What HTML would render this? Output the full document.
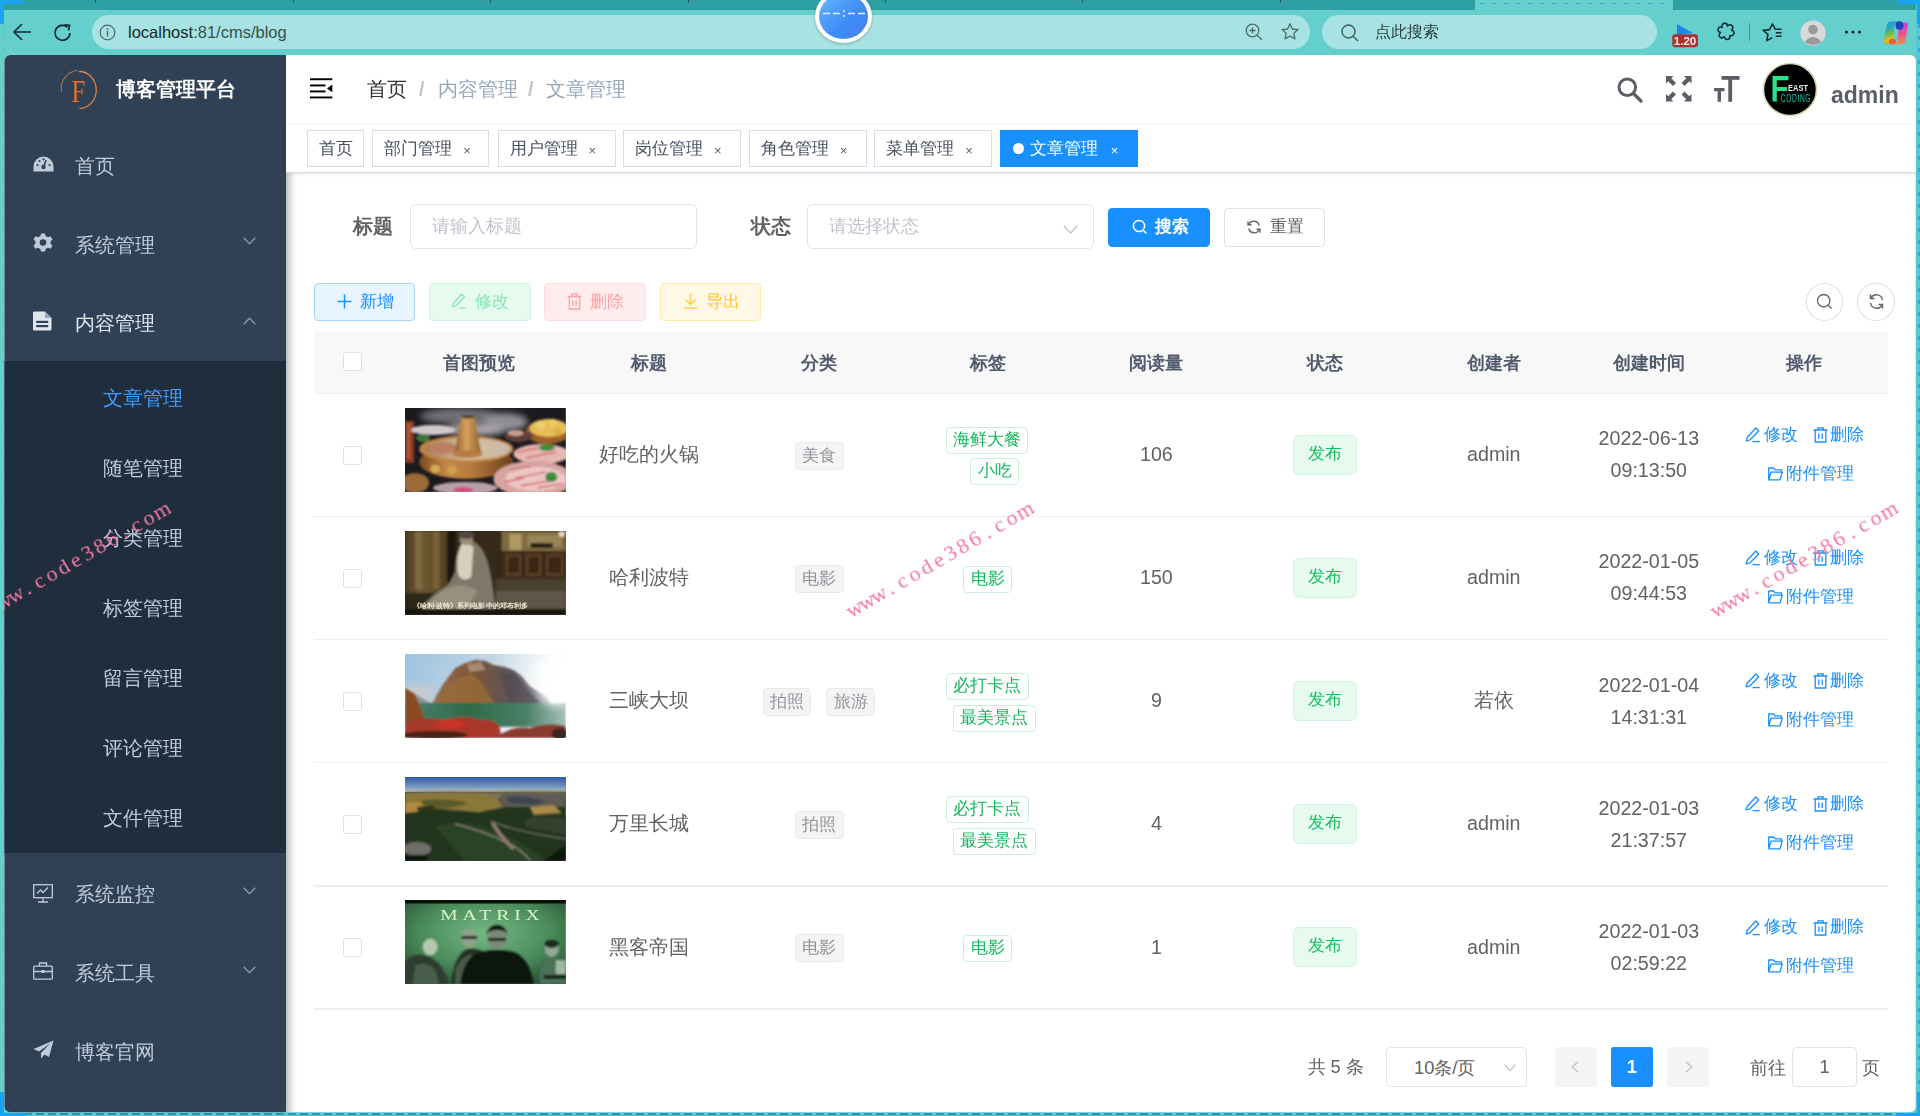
<!DOCTYPE html>
<html><head><meta charset="utf-8">
<style>
*{box-sizing:border-box;}
html,body{margin:0;padding:0;}
body{width:1920px;height:1116px;overflow:hidden;position:relative;background:#64cfcc;font-family:"Liberation Sans",sans-serif;}
.a{position:absolute;}
.t{position:absolute;white-space:nowrap;}
/* chrome */
#topstrip{left:0;top:0;width:1920px;height:10px;background:#2e9fa2;}
.pill{position:absolute;top:15px;height:34px;border-radius:17px;background:#a7e3e2;}
/* page */
#page{position:absolute;left:0;top:0;width:1920px;height:1116px;clip-path:inset(55px 4.3px 3.8px 4.5px round 6px);background:#fff;}
#sidebar{left:3.5px;top:55px;width:282.5px;height:1062px;background:#304156;box-shadow:3px 0 8px rgba(0,21,41,.35);}
.mi{position:absolute;left:75px;font-size:19.67px;line-height:30px;height:30px;color:#bfcbd9;}
.smi{position:absolute;left:103px;font-size:19.67px;line-height:30px;height:30px;color:#bfcbd9;}
.arrow{position:absolute;left:243px;width:13px;height:8px;}
.ic{position:absolute;}
/* navbar */
.bc{font-size:19.67px;line-height:30px;top:74px;}
/* tags */
.tag{position:absolute;top:130.4px;height:36.5px;border:1.4px solid #d8dce5;background:#fff;color:#495060;font-size:16.86px;line-height:36px;padding-left:11px;}
.tag .x{position:absolute;font-size:13px;color:#5a6070;margin-left:2px;margin-top:1.5px;}
/* form */
.lbl{font-size:19.67px;line-height:30px;font-weight:bold;color:#606266;}
.inp{position:absolute;height:44.4px;border:1.4px solid #e0e3e9;border-radius:5.6px;background:#fff;}
.ph{font-size:18.27px;line-height:30px;color:#c0c4cc;}
.btn{position:absolute;border-radius:4.2px;font-size:16.86px;}
/* table */
.th{font-size:18.27px;line-height:30px;font-weight:bold;color:#515a6e;}
.td{font-size:19.67px;line-height:30px;color:#606266;}
.cb{position:absolute;width:19px;height:19px;border:1.4px solid #dcdfe6;border-radius:2.8px;background:#fff;}
.gtag{position:absolute;height:27px;border:1.4px solid #c9efd9;border-radius:4.2px;background:#fff;color:#13b85c;font-size:16.86px;line-height:24px;text-align:center;}
.itag{position:absolute;height:28px;border:1.4px solid #e9e9eb;border-radius:4.2px;background:#f4f4f5;color:#909399;font-size:16.86px;line-height:25px;text-align:center;}
.stag{position:absolute;height:39.6px;border:1.4px solid #d0f5e0;border-radius:5.6px;background:#e7faf0;color:#13c060;font-size:16.86px;line-height:36px;text-align:center;}
.op{font-size:16.86px;line-height:24px;color:#1890ff;}
.rowline{position:absolute;left:313.8px;width:1574px;height:1.4px;background:#ebeef5;}
.wm{position:absolute;font-family:"Liberation Serif",serif;color:#f07aa0;font-size:22px;line-height:22px;transform-origin:0 0;white-space:nowrap;}
.wm span{display:inline-block;width:14px;text-align:center;}
</style></head>
<body><div id="wrap" style="position:absolute;left:0;top:0;width:1920px;height:1116px;overflow:hidden;filter:blur(0.35px)">
<!-- ============ BROWSER CHROME ============ -->
<div id="topstrip" class="a"></div>
<div class="a" style="left:24px;top:1.5px;width:1450px;height:1px;background:repeating-linear-gradient(90deg,#3a9ed0 0 3px,transparent 3px 12px);opacity:.5"></div>
<div class="a" style="left:95px;top:0;width:1.2px;height:3px;background:#1d5a5a"></div>
<div class="a" style="left:293px;top:0;width:1.2px;height:3px;background:#1d5a5a"></div>
<div class="a" style="left:490px;top:0;width:1.2px;height:3px;background:#1d5a5a"></div>
<div class="a" style="left:688px;top:0;width:1.2px;height:3px;background:#1d5a5a"></div>
<div class="a" style="left:885px;top:0;width:1.2px;height:3px;background:#1d5a5a"></div>
<div class="a" style="left:1082px;top:0;width:1.2px;height:3px;background:#1d5a5a"></div>
<div class="a" style="left:1280px;top:0;width:1.2px;height:3px;background:#1d5a5a"></div>
<div class="a" style="left:1475px;top:0;width:198px;height:10px;background:#64cfcc;border-radius:0 0 0 0"></div>
<div class="a" style="left:1480px;top:2.5px;width:190px;height:1px;background:repeating-linear-gradient(90deg,#3aa8d8 0 5px,transparent 5px 12px)"></div>
<div class="a" style="left:0;top:0;width:4px;height:24px;background:#1aa3f0"></div>
<div class="a" style="left:0;top:0;width:24px;height:4px;background:#1aa3f0"></div>
<div class="pill" style="left:92px;width:1218px;"></div>
<div class="pill" style="left:1322px;width:335px;"></div>
<!-- back arrow -->
<svg class="a" style="left:12px;top:22px" width="22" height="20" viewBox="0 0 22 20"><path d="M2 10 H19 M10 2 L2 10 L10 18" fill="none" stroke="#0f2b2e" stroke-width="1.6"/></svg>
<!-- refresh -->
<svg class="a" style="left:52px;top:22px" width="22" height="22" viewBox="0 0 22 22"><path d="M18 11 A7.5 7.5 0 1 1 15.5 5.2" fill="none" stroke="#0f2b2e" stroke-width="1.7"/><path d="M12.5 2.5 L17.5 3.5 L16.5 8.5" fill="none" stroke="#0f2b2e" stroke-width="1.7"/></svg>
<!-- info -->
<svg class="a" style="left:99px;top:24px" width="17" height="17" viewBox="0 0 17 17"><circle cx="8.5" cy="8.5" r="7.3" fill="none" stroke="#4c6a6b" stroke-width="1.2"/><rect x="7.8" y="7" width="1.4" height="5.5" fill="#4c6a6b"/><circle cx="8.5" cy="4.9" r="0.9" fill="#4c6a6b"/></svg>
<div class="t" style="left:128px;top:22px;font-size:16.5px;line-height:20px;color:#13282a">localhost<span style="color:#35504f">:81/cms/blog</span></div>
<!-- zoom icon -->
<svg class="a" style="left:1244px;top:22px" width="20" height="20" viewBox="0 0 20 20"><circle cx="8.5" cy="8.5" r="6.3" fill="none" stroke="#4e6b6c" stroke-width="1.3"/><path d="M8.5 5.5 V11.5 M5.5 8.5 H11.5 M13 13 L18 18" stroke="#4e6b6c" stroke-width="1.3"/></svg>
<!-- star -->
<svg class="a" style="left:1280px;top:22px" width="20" height="20" viewBox="0 0 20 20"><path d="M10 1.8 L12.4 7 L18 7.6 L13.8 11.3 L15 16.9 L10 14 L5 16.9 L6.2 11.3 L2 7.6 L7.6 7 Z" fill="none" stroke="#4e6b6c" stroke-width="1.3" stroke-linejoin="round"/></svg>
<!-- search icon in pill -->
<svg class="a" style="left:1340px;top:23px" width="20" height="20" viewBox="0 0 20 20"><circle cx="8.5" cy="8.5" r="6.5" fill="none" stroke="#3d5d5e" stroke-width="1.4"/><path d="M13.2 13.2 L18 18" stroke="#3d5d5e" stroke-width="1.4"/></svg>
<div class="t" style="left:1375px;top:22px;font-size:16px;line-height:20px;color:#2c3b3b">点此搜索</div>
<!-- badge -->
<svg class="a" style="left:1672px;top:23px" width="27" height="25" viewBox="0 0 27 25"><path d="M5 1 L21 10 L5 12 Z" fill="#1e88e5"/><rect x="0.3" y="11.2" width="25.7" height="13" rx="3" fill="#a83232"/><text x="13" y="22.4" font-family="Liberation Sans" font-size="11.5" font-weight="bold" fill="#fbe8e8" text-anchor="middle">1.20</text></svg>
<!-- puzzle -->
<svg class="a" style="left:1717px;top:22px" width="19" height="19" viewBox="0 0 19 19"><path d="M10.65 3.95 C14.12 0.95 17.72 4.83 14.46 8.06 C18.80 9.56 17.23 14.62 12.81 13.41 C13.67 17.91 8.51 19.09 7.35 14.65 C3.88 17.65 0.28 13.77 3.54 10.54 C-0.80 9.04 0.77 3.98 5.19 5.19 C4.33 0.69 9.49 -0.49 10.65 3.95 Z" fill="none" stroke="#0f2a2c" stroke-width="1.5" stroke-linejoin="round"/></svg>
<div class="a" style="left:1748.5px;top:23px;width:1.3px;height:18px;background:#3a9a9c"></div>
<!-- star list -->
<svg class="a" style="left:1762px;top:22px" width="22" height="21" viewBox="0 0 22 21"><path d="M13.3 7.3 L10.4 2 L7.5 7.6 L1.3 8.4 L5.9 12.5 L4.8 18.6 L10.3 15.6" fill="none" stroke="#0f2a2c" stroke-width="1.6" stroke-linejoin="round"/><path d="M13.2 7.2 H19.5 M13.8 10.8 H19.5 M13.8 14.3 H19.5" stroke="#0f2a2c" stroke-width="1.6"/></svg>
<!-- avatar -->
<svg class="a" style="left:1800px;top:19.5px" width="26" height="26" viewBox="0 0 26 26"><circle cx="13" cy="13" r="12.6" fill="#d9d9d9"/><circle cx="13" cy="9.5" r="4.8" fill="#9b9b9b"/><path d="M4.5 22 Q13 12 21.5 22 Q13 28 4.5 22 Z" fill="#9b9b9b"/></svg>
<!-- more -->
<svg class="a" style="left:1844px;top:29px" width="18" height="6" viewBox="0 0 18 6"><circle cx="2.5" cy="3" r="1.6" fill="#102a2c"/><circle cx="9" cy="3" r="1.6" fill="#102a2c"/><circle cx="15.5" cy="3" r="1.6" fill="#102a2c"/></svg>
<!-- copilot -->
<svg class="a" style="left:1882px;top:20px" width="28" height="26" viewBox="0 0 28 26">
<defs><linearGradient id="cpa" x1="0" y1="0" x2="0.3" y2="1"><stop offset="0" stop-color="#1f8fe0"/><stop offset=".35" stop-color="#2aa8c8"/><stop offset=".6" stop-color="#62c048"/><stop offset=".85" stop-color="#e8c020"/><stop offset="1" stop-color="#f08a20"/></linearGradient>
<linearGradient id="cpb" x1="0" y1="0" x2="0" y2="1"><stop offset="0" stop-color="#c448e0"/><stop offset=".5" stop-color="#f0508a"/><stop offset="1" stop-color="#f59050"/></linearGradient></defs>
<path d="M5 4 Q6 1.5 9 1.5 H17 Q13 2.5 12.5 6 L11 20 Q10.5 23.5 7 23.5 H4 Q1.5 23.5 2 20.5 Z" fill="url(#cpa)"/>
<path d="M23 22 Q22 24.5 19 24.5 H11 Q15 23.5 15.5 20 L17 6 Q17.5 2.5 21 2.5 H24 Q26.5 2.5 26 5.5 Z" fill="url(#cpb)"/>
<ellipse cx="17.5" cy="5.5" rx="4" ry="4.2" fill="#1d3fc4"/>
<ellipse cx="10.5" cy="21.5" rx="3.5" ry="3" fill="#e8602a"/>
</svg>
<div class="a" style="left:1916px;top:0;width:4px;height:1116px;background:#56c9d0"></div>
<div class="a" style="left:1918px;top:24px;width:1.5px;height:1092px;background:repeating-linear-gradient(180deg,#3aa6d6 0 4px,transparent 4px 12px)"></div>
<div class="a" style="left:1898px;top:0;width:22px;height:4px;background:#1aa3f0"></div>
<div class="a" style="left:1917px;top:0;width:3px;height:24px;background:#1aa3f0"></div>
<div class="a" style="left:2.5px;top:24px;width:1.5px;height:1092px;background:repeating-linear-gradient(180deg,#3ab4d8 0 4px,transparent 4px 12px);opacity:.5"></div>
<div class="a" style="left:0;top:1112px;width:1920px;height:4px;background:#56c9d0"></div>
<div class="a" style="left:0;top:1113px;width:1920px;height:1.5px;background:repeating-linear-gradient(90deg,#2a98b0 0 8px,transparent 8px 12px)"></div>
<div class="a" style="left:0;top:1092px;width:4px;height:24px;background:#1aa3f0"></div>
<div class="a" style="left:0;top:1113px;width:25px;height:3px;background:#1aa3f0"></div>
<div class="a" style="left:1896px;top:1113px;width:24px;height:3px;background:#1aa3f0"></div>
<div class="a" style="left:1917px;top:1092px;width:3px;height:24px;background:#1aa3f0"></div>
<!-- floating circle -->
<div class="a" style="left:815px;top:-10px;width:57px;height:53px;border-radius:50%;background:#fff;box-shadow:0 1px 3px rgba(0,0,0,.25)"></div>
<div class="a" style="left:819px;top:-6px;width:49px;height:45px;border-radius:50%;background:linear-gradient(135deg,#69b7ff,#3d8cf5 60%,#4a7fe8)"></div>
<svg class="a" style="left:822px;top:9px" width="44" height="10" viewBox="0 0 44 10"><path d="M1 4.5 H8 M11 4.5 H18 M26 4.5 H33 M36 4.5 H43" stroke="#e6f2ff" stroke-width="1.6"/><circle cx="22" cy="2" r="0.9" fill="#e6f2ff"/><circle cx="22" cy="7" r="0.9" fill="#e6f2ff"/></svg>

<!-- ============ PAGE ============ -->
<div id="page">
<!-- sidebar -->
<div id="sidebar" class="a"></div>
<div class="a" style="left:3.5px;top:361.1px;width:282.5px;height:491.8px;background:#1f2d3d"></div>
<!-- logo -->
<svg class="a" style="left:58px;top:68px" width="42" height="44" viewBox="0 0 42 44"><path d="M20 2.5 A18 18 0 0 0 3.5 24" fill="none" stroke="#b07850" stroke-width="1.1"/><path d="M21 3.5 A17 18.5 0 0 1 21.5 40.5" fill="none" stroke="#d9824a" stroke-width="1.3"/><text x="0" y="0" transform="translate(20.3 33.8) scale(0.8 1)" font-family="Liberation Serif" font-size="31" fill="#e0712f" text-anchor="middle">F</text></svg>
<div class="t" style="left:116px;top:74px;font-size:19.67px;line-height:30px;font-weight:bold;color:#fff">博客管理平台</div>
<!-- menu icons -->
<svg class="ic" style="left:32.5px;top:156px" width="21" height="16" viewBox="0 0 21 16"><path d="M10.5 0.5 A10 10 0 0 0 0.5 10.5 V15.5 H20.5 V10.5 A10 10 0 0 0 10.5 0.5 Z" fill="#bfcbd9"/><circle cx="10.5" cy="11" r="2.2" fill="#304156"/><path d="M10.5 11 L13 4" stroke="#304156" stroke-width="1.6"/><circle cx="4.5" cy="9" r="1.1" fill="#304156"/><circle cx="16.5" cy="9" r="1.1" fill="#304156"/><circle cx="6.5" cy="5" r="1.1" fill="#304156"/><circle cx="10.5" cy="3.3" r="1.1" fill="#304156"/></svg>
<div class="mi" style="top:151px">首页</div>
<svg class="ic" style="left:33px;top:233px" width="20" height="19" viewBox="0 0 20 19"><path d="M8 0.5 H12 L12.6 3 L15 4.2 L17.5 3.2 L19.5 6.5 L17.6 8.3 V10.7 L19.5 12.5 L17.5 15.8 L15 14.8 L12.6 16 L12 18.5 H8 L7.4 16 L5 14.8 L2.5 15.8 L0.5 12.5 L2.4 10.7 V8.3 L0.5 6.5 L2.5 3.2 L5 4.2 L7.4 3 Z" fill="#bfcbd9"/><circle cx="10" cy="9.5" r="3.3" fill="#304156"/></svg>
<div class="mi" style="top:229.8px">系统管理</div>
<svg class="arrow" style="top:237px" viewBox="0 0 13 8"><path d="M0.7 0.7 L6.5 6.8 L12.3 0.7" fill="none" stroke="#8a97a6" stroke-width="1.3"/></svg>
<svg class="ic" style="left:33px;top:311px" width="19" height="20" viewBox="0 0 19 20"><path d="M1.5 0.5 H12 L18.5 7 V18 Q18.5 19.5 17 19.5 H1.5 Q0 19.5 0 18 V2 Q0 0.5 1.5 0.5 Z" fill="#dfe6ee"/><path d="M12 0.5 V7 H18.5" fill="#9aa7b6"/><rect x="3.2" y="9.8" width="12" height="2.2" fill="#304156"/><rect x="3.2" y="14" width="12" height="2.2" fill="#304156"/></svg>
<div class="mi" style="top:308.3px;color:#dfe6ee">内容管理</div>
<svg class="arrow" style="top:317px" viewBox="0 0 13 8"><path d="M0.7 7.3 L6.5 1.2 L12.3 7.3" fill="none" stroke="#8a97a6" stroke-width="1.3"/></svg>
<div class="smi" style="top:382.7px;color:#409eff">文章管理</div>
<div class="smi" style="top:452.8px">随笔管理</div>
<div class="smi" style="top:522.9px">分类管理</div>
<div class="smi" style="top:593px">标签管理</div>
<div class="smi" style="top:663.1px">留言管理</div>
<div class="smi" style="top:733.2px">评论管理</div>
<div class="smi" style="top:803.3px">文件管理</div>
<svg class="ic" style="left:32.5px;top:883.5px" width="20" height="19" viewBox="0 0 20 19"><rect x="0.7" y="0.7" width="18.6" height="13" fill="none" stroke="#bfcbd9" stroke-width="1.3"/><path d="M4 9.5 L7.5 6 L10 8.5 L15 3.5" fill="none" stroke="#bfcbd9" stroke-width="1.3"/><path d="M10 13.7 V17.8 M5 18 H15" stroke="#bfcbd9" stroke-width="1.3"/></svg>
<div class="mi" style="top:879px">系统监控</div>
<svg class="arrow" style="top:887px" viewBox="0 0 13 8"><path d="M0.7 0.7 L6.5 6.8 L12.3 0.7" fill="none" stroke="#8a97a6" stroke-width="1.3"/></svg>
<svg class="ic" style="left:33px;top:962px" width="20" height="18" viewBox="0 0 20 18"><rect x="0.7" y="4.2" width="18.6" height="13" rx="1" fill="none" stroke="#bfcbd9" stroke-width="1.3"/><path d="M6.5 4.2 V1 H13.5 V4.2 M0.7 9.5 H19.3" fill="none" stroke="#bfcbd9" stroke-width="1.3"/><rect x="8.5" y="8" width="3" height="3" fill="#bfcbd9"/></svg>
<div class="mi" style="top:957.6px">系统工具</div>
<svg class="arrow" style="top:966px" viewBox="0 0 13 8"><path d="M0.7 0.7 L6.5 6.8 L12.3 0.7" fill="none" stroke="#8a97a6" stroke-width="1.3"/></svg>
<svg class="ic" style="left:32.5px;top:1040px" width="21" height="19" viewBox="0 0 21 19"><path d="M20.5 0.5 L0.5 9 L6 11.5 L17 3.5 L8 13 V18.5 L11.5 14.5 L16 17 Z" fill="#bfcbd9"/></svg>
<div class="mi" style="top:1036.7px">博客官网</div>

<!-- navbar -->
<div class="a" style="left:286px;top:55px;width:1630px;height:70px;background:#fff;box-shadow:0 1.4px 5.6px rgba(0,21,41,.08)"></div>
<svg class="a" style="left:310px;top:78px" width="23" height="21" viewBox="0 0 23 21"><rect x="0" y="0.3" width="22.3" height="1.9" fill="#000"/><rect x="0" y="6.5" width="15.5" height="1.9" fill="#000"/><rect x="0" y="12.5" width="15.5" height="1.9" fill="#000"/><rect x="0" y="18.5" width="22.3" height="1.9" fill="#000"/><path d="M17 10.4 L22.3 6.5 V14.3 Z" fill="#000"/></svg>
<div class="t bc" style="left:367px;color:#303133">首页</div>
<div class="t bc" style="left:419px;color:#c0c4cc;font-weight:bold">/</div>
<div class="t bc" style="left:437.5px;color:#97a8be">内容管理</div>
<div class="t bc" style="left:528px;color:#c0c4cc;font-weight:bold">/</div>
<div class="t bc" style="left:546px;color:#97a8be">文章管理</div>
<!-- right menu -->
<svg class="a" style="left:1617px;top:76.5px" width="27" height="27" viewBox="0 0 27 27"><circle cx="10.3" cy="10.3" r="8.3" fill="none" stroke="#5a5e66" stroke-width="3"/><path d="M16.5 16.5 L24 24" stroke="#5a5e66" stroke-width="3.2" stroke-linecap="round"/></svg>
<svg class="a" style="left:1665.5px;top:76px" width="26" height="26" viewBox="0 0 26 26"><g fill="#5a5e66"><path d="M0 0 H7.5 L5.3 2.2 L10 6.9 L7 9.9 L2.2 5.2 L0 7.5 Z"/><path d="M25.5 0 V7.5 L23.3 5.3 L18.6 10 L15.6 7 L20.3 2.2 L18 0 Z"/><path d="M0 25.5 V18 L2.2 20.2 L6.9 15.5 L9.9 18.5 L5.2 23.3 L7.5 25.5 Z"/><path d="M25.5 25.5 H18 L20.2 23.3 L15.5 18.6 L18.5 15.6 L23.3 20.3 L25.5 18 Z"/></g></svg>
<svg class="a" style="left:1713.5px;top:76px" width="26" height="26" viewBox="0 0 26 26"><g fill="#5a5e66"><rect x="7.5" y="0" width="18" height="3.8"/><rect x="14.3" y="0" width="3.8" height="25.8"/><rect x="0" y="12" width="10.5" height="3.2"/><rect x="3.6" y="12" width="3.4" height="13.8"/></g></svg>
<svg class="a" style="left:1762px;top:62px" width="56" height="55" viewBox="0 0 56 55"><ellipse cx="28" cy="27.5" rx="26.5" ry="26" fill="#000" stroke="#d9d5b0" stroke-width="1.6"/>
<path d="M10.5 14 H26.5 V18.3 H14.8 V25 H25 V29 H14.8 V39.5 H10.5 Z" fill="#26e28a"/>
<text x="26" y="29" font-family="Liberation Sans" font-size="9.5" font-weight="bold" fill="#eeeeee" textLength="20" lengthAdjust="spacingAndGlyphs">EAST</text>
<text x="18.7" y="39.8" font-family="Liberation Sans" font-size="10" fill="#1fc8b0" textLength="30.5" lengthAdjust="spacingAndGlyphs" letter-spacing="1">CODING</text>
</svg>
<div class="t" style="left:1831px;top:80px;font-size:23px;line-height:30px;font-weight:bold;color:#5a5e66">admin</div>

<!-- tags view -->
<div class="a" style="left:286px;top:125.2px;width:1630px;height:47.6px;background:#fff;border-bottom:1.4px solid #d8dce5;box-shadow:0 1.4px 4.2px 0 rgba(0,0,0,.12),0 0 4.2px 0 rgba(0,0,0,.04)"></div>
<div class="tag" style="left:307.2px;width:57.3px">首页</div>
<div class="tag" style="left:372.3px;width:117px">部门管理<span class="x" style="left:88px;top:0">×</span></div>
<div class="tag" style="left:497.5px;width:118px">用户管理<span class="x" style="left:88px;top:0">×</span></div>
<div class="tag" style="left:623px;width:118px">岗位管理<span class="x" style="left:88px;top:0">×</span></div>
<div class="tag" style="left:748.7px;width:118px">角色管理<span class="x" style="left:88px;top:0">×</span></div>
<div class="tag" style="left:874.2px;width:118px">菜单管理<span class="x" style="left:88px;top:0">×</span></div>
<div class="tag" style="left:999.8px;width:138px;background:#1890ff;border-color:#1890ff;color:#fff;padding-left:12px"><span style="display:inline-block;width:11.2px;height:11.2px;border-radius:50%;background:#fff;margin-right:6px;vertical-align:0px"></span>文章管理<span class="x" style="left:108px;top:0;color:#fff">×</span></div>
<!-- form -->
<div class="t lbl" style="left:352.5px;top:210.7px">标题</div>
<div class="inp" style="left:409.6px;top:204.2px;width:287.1px"></div>
<div class="t ph" style="left:431.5px;top:210.7px">请输入标题</div>
<div class="t lbl" style="left:750.5px;top:210.7px">状态</div>
<div class="inp" style="left:807.3px;top:204.2px;width:286.5px"></div>
<div class="t ph" style="left:829px;top:210.7px">请选择状态</div>
<svg class="a" style="left:1063px;top:225px" width="15" height="9" viewBox="0 0 15 9"><path d="M0.8 0.8 L7.5 8 L14.2 0.8" fill="none" stroke="#c0c4cc" stroke-width="1.4"/></svg>
<div class="btn" style="left:1108.4px;top:208px;width:101.3px;height:38.6px;background:#1890ff;"></div>
<svg class="a" style="left:1132px;top:219px" width="16" height="16" viewBox="0 0 16 16"><circle cx="7" cy="7" r="5.6" fill="none" stroke="#fff" stroke-width="1.5"/><path d="M11 11 L14.5 14.5" stroke="#fff" stroke-width="1.5"/></svg>
<div class="t" style="left:1154.5px;top:212.3px;font-size:16.86px;line-height:30px;color:#fff;font-weight:bold">搜索</div>
<div class="btn" style="left:1224px;top:208px;width:100.7px;height:38.6px;background:#fff;border:1.4px solid #dcdfe6"></div>
<svg class="a" style="left:1246px;top:219px" width="16" height="16" viewBox="0 0 16 16"><path d="M13.2 6.5 A5.5 5.5 0 0 0 3 5" fill="none" stroke="#606266" stroke-width="1.4"/><path d="M2.8 9.5 A5.5 5.5 0 0 0 13 11" fill="none" stroke="#606266" stroke-width="1.4"/><path d="M2 2.3 V5.8 H5.5" fill="none" stroke="#606266" stroke-width="1.4"/><path d="M14 13.7 V10.2 H10.5" fill="none" stroke="#606266" stroke-width="1.4"/></svg>
<div class="t" style="left:1269.5px;top:212.3px;font-size:16.86px;line-height:30px;color:#606266">重置</div>

<!-- toolbar -->
<div class="btn" style="left:314.2px;top:283.2px;width:101.2px;height:38.2px;background:#e8f4ff;border:1.4px solid #a3d3ff"></div>
<svg class="a" style="left:337px;top:293.5px" width="15" height="15" viewBox="0 0 15 15"><path d="M7.5 0.5 V14.5 M0.5 7.5 H14.5" stroke="#1890ff" stroke-width="1.5"/></svg>
<div class="t" style="left:359.5px;top:287.3px;font-size:16.86px;line-height:30px;color:#1890ff">新增</div>
<div class="btn" style="left:429.2px;top:283.2px;width:101.5px;height:38.2px;background:#e7faf0;border:1.4px solid #d0f5e0"></div>
<svg class="a" style="left:451px;top:293px" width="16" height="16" viewBox="0 0 16 16"><path d="M10.5 1.2 L13.5 4.2 L5 12.7 L1.5 13.7 L2.5 10.2 Z" fill="none" stroke="#89e6b3" stroke-width="1.3" stroke-linejoin="round"/><path d="M8 15 H14.5" stroke="#89e6b3" stroke-width="1.3"/></svg>
<div class="t" style="left:474.5px;top:287.3px;font-size:16.86px;line-height:30px;color:#89e6b3">修改</div>
<div class="btn" style="left:544px;top:283.2px;width:101.7px;height:38.2px;background:#ffeded;border:1.4px solid #ffdbdb"></div>
<svg class="a" style="left:566.5px;top:292.5px" width="15" height="17" viewBox="0 0 15 17"><path d="M0.5 3.5 H14.5 M5 3.5 V1 H10 V3.5 M2.3 3.5 V16 H12.7 V3.5 M5.8 7 V13 M9.2 7 V13" fill="none" stroke="#ffa4a4" stroke-width="1.3"/></svg>
<div class="t" style="left:590px;top:287.3px;font-size:16.86px;line-height:30px;color:#ffa4a4">删除</div>
<div class="btn" style="left:660.4px;top:283.2px;width:100.6px;height:38.2px;background:#fff8e6;border:1.4px solid #ffe9ac"></div>
<svg class="a" style="left:683px;top:293px" width="15" height="16" viewBox="0 0 15 16"><path d="M7.5 0.5 V11 M2.5 6.5 L7.5 11.5 L12.5 6.5 M1 15 H14" fill="none" stroke="#ffcc4d" stroke-width="1.4"/></svg>
<div class="t" style="left:705.5px;top:287.3px;font-size:16.86px;line-height:30px;color:#ffc233">导出</div>
<div class="a" style="left:1805.5px;top:283px;width:37.5px;height:38px;border-radius:50%;border:1.4px solid #dcdfe6;background:#fff"></div>
<svg class="a" style="left:1816px;top:293px" width="17" height="17" viewBox="0 0 17 17"><circle cx="7.7" cy="7.7" r="6.2" fill="none" stroke="#606266" stroke-width="1.3"/><path d="M12.2 12.2 L15.5 15.5" stroke="#606266" stroke-width="1.4"/></svg>
<div class="a" style="left:1857.4px;top:283px;width:37.5px;height:38px;border-radius:50%;border:1.4px solid #dcdfe6;background:#fff"></div>
<svg class="a" style="left:1868px;top:293px" width="17" height="17" viewBox="0 0 17 17"><path d="M14.5 7 A6.2 6.2 0 0 0 3.2 4.5" fill="none" stroke="#606266" stroke-width="1.4"/><path d="M2.5 10 A6.2 6.2 0 0 0 13.8 12.5" fill="none" stroke="#606266" stroke-width="1.4"/><path d="M2.5 1.5 V5.5 H6.5" fill="none" stroke="#606266" stroke-width="1.4"/><path d="M14.5 15.5 V11.5 H10.5" fill="none" stroke="#606266" stroke-width="1.4"/></svg>

<!-- table header -->
<div class="a" style="left:313.8px;top:332.1px;width:1574.2px;height:61.5px;background:#f8f8f9"></div>
<div class="rowline" style="top:392.8px"></div>
<div class="cb" style="left:343.3px;top:352.3px"></div>
<div class="t th" style="left:278.8px;width:400px;text-align:center;top:347.5px;line-height:30px;">首图预览</div>
<div class="t th" style="left:449.4px;width:400px;text-align:center;top:347.5px;line-height:30px;">标题</div>
<div class="t th" style="left:619.0px;width:400px;text-align:center;top:347.5px;line-height:30px;">分类</div>
<div class="t th" style="left:787.5px;width:400px;text-align:center;top:347.5px;line-height:30px;">标签</div>
<div class="t th" style="left:956.4px;width:400px;text-align:center;top:347.5px;line-height:30px;">阅读量</div>
<div class="t th" style="left:1125.0px;width:400px;text-align:center;top:347.5px;line-height:30px;">状态</div>
<div class="t th" style="left:1293.8px;width:400px;text-align:center;top:347.5px;line-height:30px;">创建者</div>
<div class="t th" style="left:1448.8px;width:400px;text-align:center;top:347.5px;line-height:30px;">创建时间</div>
<div class="t th" style="left:1603.8px;width:400px;text-align:center;top:347.5px;line-height:30px;">操作</div>
<div class="rowline" style="top:515.9px"></div>
<div class="cb" style="left:343.3px;top:445.5px"></div>
<div class="a" style="left:405px;top:408.0px;width:160.8px;height:83.9px;overflow:hidden"><svg width="160.8" height="83.9" viewBox="0 0 160 84" preserveAspectRatio="none" style="display:block">
<defs><filter id="b1" x="-10%" y="-10%" width="120%" height="120%"><feGaussianBlur stdDeviation="0.9"/></filter>
<filter id="b1s" x="-20%" y="-20%" width="140%" height="140%"><feGaussianBlur stdDeviation="3"/></filter>
<linearGradient id="pot1" x1="0" y1="0" x2="1" y2="0"><stop offset="0" stop-color="#7a4a22"/><stop offset=".3" stop-color="#c48a4a"/><stop offset=".55" stop-color="#b87a3c"/><stop offset="1" stop-color="#6a3e1c"/></linearGradient>
<linearGradient id="chim1" x1="0" y1="0" x2="1" y2="0"><stop offset="0" stop-color="#8a5a2a"/><stop offset=".45" stop-color="#d8a460"/><stop offset="1" stop-color="#8e5e2c"/></linearGradient>
<linearGradient id="broth1" x1="0" y1="0" x2="1" y2="0"><stop offset="0" stop-color="#a87a58"/><stop offset=".5" stop-color="#d8c0a0"/><stop offset="1" stop-color="#c8b8a8"/></linearGradient></defs>
<rect width="160" height="84" fill="#1c1a1e"/>
<g filter="url(#b1s)">
<ellipse cx="55" cy="8" rx="40" ry="8" fill="#6e6e74"/>
<ellipse cx="100" cy="14" rx="22" ry="9" fill="#8e8e94"/>
<ellipse cx="70" cy="22" rx="30" ry="6" fill="#a8a4a8"/>
</g>
<g filter="url(#b1)">
<rect x="0" y="13" width="9" height="42" fill="#8a3b26"/>
<rect x="2" y="15" width="3" height="36" fill="#b05a3a"/>
<ellipse cx="28" cy="22" rx="22" ry="5" fill="#d0c8cc"/>
<ellipse cx="18" cy="30" rx="7" ry="4" fill="#3a7a3a"/>
<ellipse cx="61" cy="54" rx="47" ry="17" fill="url(#pot1)"/>
<ellipse cx="61" cy="41" rx="47" ry="13.5" fill="#c08444"/>
<ellipse cx="62" cy="41" rx="43" ry="11" fill="url(#broth1)"/>
<ellipse cx="38" cy="40" rx="13" ry="6" fill="#b88060"/>
<ellipse cx="30" cy="61" rx="5" ry="4" fill="#d8aa50"/>
<ellipse cx="47" cy="62" rx="5" ry="4" fill="#d0a048"/>
<path d="M56 8 H69 L76 46 H49 Z" fill="url(#chim1)"/>
<ellipse cx="62.5" cy="9" rx="6.5" ry="1.6" fill="#4a3422"/>
<ellipse cx="62" cy="46" rx="15" ry="4" fill="#b87c40"/>
<ellipse cx="142" cy="24" rx="22" ry="12" fill="#a0602a"/>
<ellipse cx="143" cy="20" rx="19" ry="9" fill="#e6be58"/>
<circle cx="135" cy="17" r="4" fill="#f2d070"/><circle cx="147" cy="15" r="4" fill="#f0cc60"/><circle cx="152" cy="24" r="4" fill="#dcae48"/>
<ellipse cx="113" cy="28" rx="14" ry="6" fill="#5e4038"/>
<ellipse cx="110" cy="25" rx="8" ry="3" fill="#c8a090"/>
<ellipse cx="136" cy="46" rx="28" ry="10" fill="#e6b8b2"/>
<ellipse cx="128" cy="71" rx="40" ry="18" fill="#d8a4a2"/>
<ellipse cx="130" cy="71" rx="30" ry="12" fill="#ecc8c4"/>
<path d="M105 62 L125 58 M110 70 L140 64 M115 78 L150 72 M120 50 L150 44 M112 44 L132 40 M100 74 L118 70 M132 80 L156 76" stroke="#c84a50" stroke-width="1.6" opacity=".7"/>
<ellipse cx="141" cy="39.5" rx="8" ry="3.5" fill="#3c8c3a"/>
<ellipse cx="145.5" cy="69" rx="6" ry="5" fill="#3c8c3a"/>
<ellipse cx="10" cy="75" rx="14" ry="10" fill="#9a6a38"/>
<ellipse cx="60" cy="80" rx="32" ry="6" fill="#b8a0a8"/>
<ellipse cx="58" cy="82" rx="10" ry="3" fill="#d05080"/>
</g></svg></div>
<div class="t td" style="left:449.4px;width:400px;text-align:center;top:439.1px;line-height:30px;">好吃的火锅</div>
<div class="itag" style="left:794.5px;top:441.7px;width:49.3px">美食</div>
<div class="gtag" style="left:945.8px;top:426.6px;width:82.5px">海鲜大餐</div>
<div class="gtag" style="left:970px;top:458.3px;width:49.2px">小吃</div>
<div class="t td" style="left:956.4px;width:400px;text-align:center;top:439.1px;line-height:30px;">106</div>
<div class="stag" style="left:1293px;top:435.0px;width:64px">发布</div>
<div class="t td" style="left:1293.8px;width:400px;text-align:center;top:439.1px;line-height:30px;">admin</div>
<div class="t td" style="left:1448.8px;width:400px;text-align:center;top:423.3px;line-height:30px;">2022-06-13</div>
<div class="t td" style="left:1448.8px;width:400px;text-align:center;top:455.3px;line-height:30px;">09:13:50</div>
<svg class="a" style="left:1744.5px;top:427.1px" width="16" height="16" viewBox="0 0 16 16"><path d="M10.8 1 L13.8 4 L5 12.8 L1.2 14 L2.2 10.2 Z" fill="none" stroke="#1890ff" stroke-width="1.3" stroke-linejoin="round"/><path d="M7.5 14.6 H14.8" stroke="#1890ff" stroke-width="1.3"/></svg>
<div class="t op" style="left:1763.5px;top:419.6px;line-height:30px;">修改</div>
<svg class="a" style="left:1812.5px;top:427.1px" width="15" height="16" viewBox="0 0 15 16"><path d="M0.5 3 H14.5 M4.8 3 V0.8 H10.2 V3 M2.2 3 V15 H12.8 V3 M5.8 6.5 V12 M9.2 6.5 V12" fill="none" stroke="#1890ff" stroke-width="1.3"/></svg>
<div class="t op" style="left:1829.5px;top:419.6px;line-height:30px;">删除</div>
<svg class="a" style="left:1768px;top:466.7px" width="15" height="14" viewBox="0 0 15 14"><path d="M0.7 12.8 V1 H5.5 L7 2.8 H13.5 V5 M0.7 12.8 L3 5.2 H14.3 L12 12.8 Z" fill="none" stroke="#1890ff" stroke-width="1.3" stroke-linejoin="round"/></svg>
<div class="t op" style="left:1786.0px;top:458.7px;line-height:30px;">附件管理</div>
<div class="rowline" style="top:639.0px"></div>
<div class="cb" style="left:343.3px;top:568.6px"></div>
<div class="a" style="left:405px;top:531.1px;width:160.8px;height:83.9px;overflow:hidden"><svg width="160.8" height="83.9" viewBox="0 0 160 84" preserveAspectRatio="none" style="display:block">
<defs><filter id="b2" x="-10%" y="-10%" width="120%" height="120%"><feGaussianBlur stdDeviation="1"/></filter>
<linearGradient id="bgl2" x1="0" y1="0" x2="1" y2="0"><stop offset="0" stop-color="#4a3c22"/><stop offset=".3" stop-color="#6e5a34"/><stop offset=".7" stop-color="#5a4828"/><stop offset="1" stop-color="#2a2214"/></linearGradient></defs>
<rect width="160" height="84" fill="#35291a"/>
<g filter="url(#b2)">
<rect x="0" y="0" width="52" height="62" fill="url(#bgl2)"/>
<rect x="10" y="0" width="7" height="58" fill="#7e6a40"/>
<rect x="28" y="0" width="6" height="58" fill="#7a643a"/>
<rect x="42" y="0" width="8" height="62" fill="#1e180e"/>
<rect x="96" y="0" width="64" height="20" fill="#7e6a40"/>
<rect x="104" y="3" width="12" height="16" fill="#b09a60"/>
<rect x="122" y="4" width="34" height="12" fill="#9a8458"/>
<rect x="125" y="12" width="22" height="5" fill="#2a2218"/>
<circle cx="156" cy="3" r="3" fill="#e8dcc0"/>
<rect x="96" y="20" width="64" height="28" fill="#3a2a1a"/>
<rect x="100" y="23" width="16" height="22" fill="#5a3e24"/><rect x="103" y="26" width="10" height="16" fill="#3a2616"/>
<rect x="120" y="23" width="16" height="22" fill="#5a3e24"/><rect x="123" y="26" width="10" height="16" fill="#3a2616"/>
<rect x="140" y="23" width="18" height="22" fill="#5a3e24"/><rect x="143" y="26" width="12" height="16" fill="#3a2616"/>
<rect x="90" y="48" width="70" height="12" fill="#48402e"/>
<rect x="90" y="60" width="70" height="18" fill="#5e5646"/>
<rect x="0" y="62" width="90" height="18" fill="#2e2618"/>
<path d="M60 8 Q76 10 82 30 Q88 50 90 84 H14 Q20 68 34 60 Q46 54 50 40 Q50 20 60 8 Z" fill="#7e786a"/>
<path d="M20 80 Q30 60 46 56 Q60 52 72 60 Q64 72 60 84 H18 Z" fill="#96907e"/>
<path d="M55 14 Q62 10 68 16 L66 46 Q58 52 53 44 Q50 30 55 14 Z" fill="#d8cfbc"/>
<ellipse cx="61" cy="9" rx="7" ry="5" fill="#9a8a78"/>
<ellipse cx="61" cy="4" rx="8" ry="4" fill="#504a44"/>
<rect x="0" y="78" width="160" height="6" fill="#141210"/>
</g>
<text x="8" y="77.5" font-family="Liberation Sans" font-size="6.8" font-weight="bold" fill="#efe6d4">《哈利·波特》系列电影中的邓布利多</text>
</svg></div>
<div class="t td" style="left:449.4px;width:400px;text-align:center;top:562.2px;line-height:30px;">哈利波特</div>
<div class="itag" style="left:794.5px;top:564.8px;width:49.3px">电影</div>
<div class="gtag" style="left:963px;top:565.5px;width:49.2px">电影</div>
<div class="t td" style="left:956.4px;width:400px;text-align:center;top:562.2px;line-height:30px;">150</div>
<div class="stag" style="left:1293px;top:558.1px;width:64px">发布</div>
<div class="t td" style="left:1293.8px;width:400px;text-align:center;top:562.2px;line-height:30px;">admin</div>
<div class="t td" style="left:1448.8px;width:400px;text-align:center;top:546.4px;line-height:30px;">2022-01-05</div>
<div class="t td" style="left:1448.8px;width:400px;text-align:center;top:578.4px;line-height:30px;">09:44:53</div>
<svg class="a" style="left:1744.5px;top:550.2px" width="16" height="16" viewBox="0 0 16 16"><path d="M10.8 1 L13.8 4 L5 12.8 L1.2 14 L2.2 10.2 Z" fill="none" stroke="#1890ff" stroke-width="1.3" stroke-linejoin="round"/><path d="M7.5 14.6 H14.8" stroke="#1890ff" stroke-width="1.3"/></svg>
<div class="t op" style="left:1763.5px;top:542.7px;line-height:30px;">修改</div>
<svg class="a" style="left:1812.5px;top:550.2px" width="15" height="16" viewBox="0 0 15 16"><path d="M0.5 3 H14.5 M4.8 3 V0.8 H10.2 V3 M2.2 3 V15 H12.8 V3 M5.8 6.5 V12 M9.2 6.5 V12" fill="none" stroke="#1890ff" stroke-width="1.3"/></svg>
<div class="t op" style="left:1829.5px;top:542.7px;line-height:30px;">删除</div>
<svg class="a" style="left:1768px;top:589.8px" width="15" height="14" viewBox="0 0 15 14"><path d="M0.7 12.8 V1 H5.5 L7 2.8 H13.5 V5 M0.7 12.8 L3 5.2 H14.3 L12 12.8 Z" fill="none" stroke="#1890ff" stroke-width="1.3" stroke-linejoin="round"/></svg>
<div class="t op" style="left:1786.0px;top:581.8px;line-height:30px;">附件管理</div>
<div class="rowline" style="top:762.1px"></div>
<div class="cb" style="left:343.3px;top:691.7px"></div>
<div class="a" style="left:405px;top:654.2px;width:160.8px;height:83.9px;overflow:hidden"><svg width="160.8" height="83.9" viewBox="0 0 160 84" preserveAspectRatio="none" style="display:block">
<defs><filter id="b3" x="-10%" y="-10%" width="120%" height="120%"><feGaussianBlur stdDeviation="0.9"/></filter>
<filter id="b3s" x="-20%" y="-20%" width="140%" height="140%"><feGaussianBlur stdDeviation="4"/></filter>
<linearGradient id="sky3" x1="0" y1="0" x2="1" y2="0.2"><stop offset="0" stop-color="#9cc2e0"/><stop offset=".55" stop-color="#c4d8e6"/><stop offset=".8" stop-color="#f0f4f6"/><stop offset="1" stop-color="#ffffff"/></linearGradient>
<linearGradient id="mt3" x1="0" y1="0" x2="1" y2="0"><stop offset="0" stop-color="#9a7050"/><stop offset=".35" stop-color="#7a5438"/><stop offset=".65" stop-color="#5e5458"/><stop offset="1" stop-color="#9ea2a8"/></linearGradient>
<linearGradient id="wt3" x1="0" y1="0" x2="1" y2="0"><stop offset="0" stop-color="#4e8070"/><stop offset=".4" stop-color="#2e6a48"/><stop offset=".75" stop-color="#4a8068"/><stop offset="1" stop-color="#a8c0b8"/></linearGradient></defs>
<rect width="160" height="84" fill="url(#sky3)"/>
<g filter="url(#b3s)"><ellipse cx="10" cy="40" rx="20" ry="10" fill="#c8ccd0"/></g>
<g filter="url(#b3)">
<path d="M0 36 Q12 40 26 50 L0 52 Z" fill="#8a9498"/>
<path d="M27 50 L32 40 L38 30 L44 22 L50 14 L60 9 L70 6 L80 7 L88 11 L99 13 L108 16 L116 22 L124 32 L140 42 L146 50 Z" fill="url(#mt3)"/>
<path d="M32 48 L42 34 L54 24 L66 20 L76 28 L84 42 L90 50 Z" fill="#9a6a38" opacity=".8"/>
<path d="M62 10 L76 8 L80 16 L64 18 Z" fill="#b8a088" opacity=".7"/>
<path d="M94 18 L110 20 L124 38 L136 50 L104 50 Z" fill="#4e4850" opacity=".6"/>
<rect x="0" y="49" width="160" height="24" fill="url(#wt3)"/>
<path d="M0 34 L10 40 L18 60 L22 84 H0 Z" fill="#8a4a24"/>
<path d="M0 70 Q20 62 40 66 Q60 60 74 66 Q86 64 94 72 L96 84 H0 Z" fill="#a8382a"/>
<path d="M90 84 Q104 72 124 74 Q142 68 160 72 V84 Z" fill="#8a3a2e"/>
<ellipse cx="46" cy="70" rx="14" ry="5" fill="#c83426"/>
<ellipse cx="30" cy="81" rx="32" ry="4" fill="#4a2418"/>
<ellipse cx="154" cy="80" rx="8" ry="6" fill="#3a2620"/>
</g>
<g filter="url(#b3s)"><ellipse cx="150" cy="25" rx="20" ry="28" fill="#ffffff" opacity=".8"/></g>
</svg></div>
<div class="t td" style="left:449.4px;width:400px;text-align:center;top:685.3px;line-height:30px;">三峡大坝</div>
<div class="itag" style="left:763.2px;top:687.9px;width:48px">拍照</div>
<div class="itag" style="left:826.2px;top:687.9px;width:48.8px">旅游</div>
<div class="gtag" style="left:946.2px;top:672.8px;width:82.5px">必打卡点</div>
<div class="gtag" style="left:953px;top:704.5px;width:82.5px">最美景点</div>
<div class="t td" style="left:956.4px;width:400px;text-align:center;top:685.3px;line-height:30px;">9</div>
<div class="stag" style="left:1293px;top:681.2px;width:64px">发布</div>
<div class="t td" style="left:1293.8px;width:400px;text-align:center;top:685.3px;line-height:30px;">若依</div>
<div class="t td" style="left:1448.8px;width:400px;text-align:center;top:669.5px;line-height:30px;">2022-01-04</div>
<div class="t td" style="left:1448.8px;width:400px;text-align:center;top:701.5px;line-height:30px;">14:31:31</div>
<svg class="a" style="left:1744.5px;top:673.3px" width="16" height="16" viewBox="0 0 16 16"><path d="M10.8 1 L13.8 4 L5 12.8 L1.2 14 L2.2 10.2 Z" fill="none" stroke="#1890ff" stroke-width="1.3" stroke-linejoin="round"/><path d="M7.5 14.6 H14.8" stroke="#1890ff" stroke-width="1.3"/></svg>
<div class="t op" style="left:1763.5px;top:665.8px;line-height:30px;">修改</div>
<svg class="a" style="left:1812.5px;top:673.3px" width="15" height="16" viewBox="0 0 15 16"><path d="M0.5 3 H14.5 M4.8 3 V0.8 H10.2 V3 M2.2 3 V15 H12.8 V3 M5.8 6.5 V12 M9.2 6.5 V12" fill="none" stroke="#1890ff" stroke-width="1.3"/></svg>
<div class="t op" style="left:1829.5px;top:665.8px;line-height:30px;">删除</div>
<svg class="a" style="left:1768px;top:712.9px" width="15" height="14" viewBox="0 0 15 14"><path d="M0.7 12.8 V1 H5.5 L7 2.8 H13.5 V5 M0.7 12.8 L3 5.2 H14.3 L12 12.8 Z" fill="none" stroke="#1890ff" stroke-width="1.3" stroke-linejoin="round"/></svg>
<div class="t op" style="left:1786.0px;top:704.9px;line-height:30px;">附件管理</div>
<div class="rowline" style="top:885.2px"></div>
<div class="cb" style="left:343.3px;top:814.8px"></div>
<div class="a" style="left:405px;top:777.3px;width:160.8px;height:83.9px;overflow:hidden"><svg width="160.8" height="83.9" viewBox="0 0 160 84" preserveAspectRatio="none" style="display:block">
<defs><filter id="b4" x="-10%" y="-10%" width="120%" height="120%"><feGaussianBlur stdDeviation="0.9"/></filter>
<linearGradient id="sky4" x1="0" y1="0" x2="0" y2="1"><stop offset="0" stop-color="#2e5aa6"/><stop offset=".7" stop-color="#7c9cc0"/><stop offset="1" stop-color="#c8c4b0"/></linearGradient></defs>
<rect width="160" height="84" fill="#24361e"/>
<rect width="160" height="15" fill="url(#sky4)"/>
<g filter="url(#b4)">
<path d="M0 15 Q40 13.5 80 14.5 Q120 13.5 160 14 V22 H0 Z" fill="#7a6e58"/>
<path d="M0 17 H80 Q95 21 100 30 L70 36 L40 32 L0 30 Z" fill="#8a7838"/>
<path d="M10 24 Q40 20 62 26 Q52 32 28 31 Z" fill="#5a5a2c"/>
<path d="M95 16 H160 V30 H95 Z" fill="#5e5c52"/>
<path d="M100 20 Q120 18 140 24 L130 28 L104 26 Z" fill="#3e4452"/>
<path d="M0 26 L16 24 L20 42 L0 46 Z" fill="#b08a40"/>
<path d="M12 30 L28 28 L32 38 L14 40 Z" fill="#34341e"/>
<path d="M124 30 L148 28 L156 36 L128 38 Z" fill="#a88a48"/>
<path d="M0 36 Q40 30 80 36 Q120 42 160 38 V84 H0 Z" fill="#22361e"/>
<path d="M30 50 Q60 40 90 55 Q120 65 140 84 H60 Z" fill="#2c4226"/>
<path d="M120 42 Q140 38 160 42 V58 Q140 54 120 50 Z" fill="#34402e"/>
<path d="M50 47 Q80 55 100 65 Q115 72 125 84" fill="none" stroke="#8a8a7a" stroke-width="1.2"/>
<path d="M85 44 Q110 55 160 62" fill="none" stroke="#7a7a6a" stroke-width="1"/>
<path d="M87 46 Q95 60 108 72" fill="none" stroke="#907a70" stroke-width="3.5"/>
<ellipse cx="12" cy="72" rx="14" ry="7" fill="#6e6e68"/>
<rect x="0" y="78" width="22" height="6" fill="#0e120e"/>
<path d="M138 84 L160 68 V84 Z" fill="#0e160e"/>
</g></svg></div>
<div class="t td" style="left:449.4px;width:400px;text-align:center;top:808.4px;line-height:30px;">万里长城</div>
<div class="itag" style="left:794.5px;top:811.0px;width:49.3px">拍照</div>
<div class="gtag" style="left:946.2px;top:795.9px;width:82.5px">必打卡点</div>
<div class="gtag" style="left:953px;top:827.6px;width:82.5px">最美景点</div>
<div class="t td" style="left:956.4px;width:400px;text-align:center;top:808.4px;line-height:30px;">4</div>
<div class="stag" style="left:1293px;top:804.3px;width:64px">发布</div>
<div class="t td" style="left:1293.8px;width:400px;text-align:center;top:808.4px;line-height:30px;">admin</div>
<div class="t td" style="left:1448.8px;width:400px;text-align:center;top:792.6px;line-height:30px;">2022-01-03</div>
<div class="t td" style="left:1448.8px;width:400px;text-align:center;top:824.6px;line-height:30px;">21:37:57</div>
<svg class="a" style="left:1744.5px;top:796.4px" width="16" height="16" viewBox="0 0 16 16"><path d="M10.8 1 L13.8 4 L5 12.8 L1.2 14 L2.2 10.2 Z" fill="none" stroke="#1890ff" stroke-width="1.3" stroke-linejoin="round"/><path d="M7.5 14.6 H14.8" stroke="#1890ff" stroke-width="1.3"/></svg>
<div class="t op" style="left:1763.5px;top:788.9px;line-height:30px;">修改</div>
<svg class="a" style="left:1812.5px;top:796.4px" width="15" height="16" viewBox="0 0 15 16"><path d="M0.5 3 H14.5 M4.8 3 V0.8 H10.2 V3 M2.2 3 V15 H12.8 V3 M5.8 6.5 V12 M9.2 6.5 V12" fill="none" stroke="#1890ff" stroke-width="1.3"/></svg>
<div class="t op" style="left:1829.5px;top:788.9px;line-height:30px;">删除</div>
<svg class="a" style="left:1768px;top:836.0px" width="15" height="14" viewBox="0 0 15 14"><path d="M0.7 12.8 V1 H5.5 L7 2.8 H13.5 V5 M0.7 12.8 L3 5.2 H14.3 L12 12.8 Z" fill="none" stroke="#1890ff" stroke-width="1.3" stroke-linejoin="round"/></svg>
<div class="t op" style="left:1786.0px;top:828.0px;line-height:30px;">附件管理</div>
<div class="rowline" style="top:1008.3px"></div>
<div class="cb" style="left:343.3px;top:937.9px"></div>
<div class="a" style="left:405px;top:900.4px;width:160.8px;height:83.9px;overflow:hidden"><svg width="160.8" height="83.9" viewBox="0 0 160 84" preserveAspectRatio="none" style="display:block">
<defs><filter id="b5" x="-10%" y="-10%" width="120%" height="120%"><feGaussianBlur stdDeviation="0.9"/></filter>
<radialGradient id="bg5" cx=".5" cy=".4" r=".75"><stop offset="0" stop-color="#74b884"/><stop offset=".55" stop-color="#4a8a5a"/><stop offset="1" stop-color="#1e4028"/></radialGradient></defs>
<rect width="160" height="84" fill="url(#bg5)"/>
<rect width="160" height="3.5" fill="#081008"/>
<g filter="url(#b5)">
<path d="M0 62 Q8 52 22 56 Q36 60 44 84 H0 Z" fill="#2e3e30"/>
<path d="M10 66 Q22 60 30 70 L34 84 H8 Z" fill="#4a5e4c"/>
<ellipse cx="25" cy="47" rx="7.5" ry="8.5" fill="#b4c8b0"/>
<path d="M46 84 Q48 58 60 50 Q72 46 84 56 L86 84 Z" fill="#243224"/>
<path d="M50 70 Q56 56 66 54 L64 84 H50 Z" fill="#4a5a48"/>
<ellipse cx="64" cy="38" rx="8" ry="9.5" fill="#90a08c"/>
<rect x="56.5" y="36" width="15" height="3" fill="#141a14"/>
<path d="M55 84 Q58 56 76 52 Q92 48 108 52 Q124 58 128 84 Z" fill="#0e160e"/>
<ellipse cx="91.5" cy="38" rx="9.5" ry="11" fill="#7a8a78"/>
<path d="M81 36 Q82 26 91.5 25 Q101 26 102 36 L100 32 Q92 28 83 32 Z" fill="#101810"/>
<rect x="83" y="38" width="17" height="3" fill="#0a100a"/>
<path d="M134 84 Q133 62 145 58 Q157 60 160 68 V84 Z" fill="#4e7058"/>
<ellipse cx="146" cy="49" rx="7" ry="8" fill="#90a894"/>
<ellipse cx="146" cy="44" rx="7" ry="4" fill="#1a2a1a"/>
<rect x="138" y="75" width="22" height="4" fill="#142014"/>
<rect x="150" y="60" width="10" height="14" fill="#d8e8d0" opacity=".6"/>
</g>
<text x="87" y="20" font-family="Liberation Serif" font-size="14" fill="#d8f6cc" text-anchor="middle" letter-spacing="3.5" textLength="104" lengthAdjust="spacingAndGlyphs">MATRIX</text>
</svg></div>
<div class="t td" style="left:449.4px;width:400px;text-align:center;top:931.5px;line-height:30px;">黑客帝国</div>
<div class="itag" style="left:794.5px;top:934.1px;width:49.3px">电影</div>
<div class="gtag" style="left:963px;top:934.8px;width:49.2px">电影</div>
<div class="t td" style="left:956.4px;width:400px;text-align:center;top:931.5px;line-height:30px;">1</div>
<div class="stag" style="left:1293px;top:927.4px;width:64px">发布</div>
<div class="t td" style="left:1293.8px;width:400px;text-align:center;top:931.5px;line-height:30px;">admin</div>
<div class="t td" style="left:1448.8px;width:400px;text-align:center;top:915.7px;line-height:30px;">2022-01-03</div>
<div class="t td" style="left:1448.8px;width:400px;text-align:center;top:947.7px;line-height:30px;">02:59:22</div>
<svg class="a" style="left:1744.5px;top:919.5px" width="16" height="16" viewBox="0 0 16 16"><path d="M10.8 1 L13.8 4 L5 12.8 L1.2 14 L2.2 10.2 Z" fill="none" stroke="#1890ff" stroke-width="1.3" stroke-linejoin="round"/><path d="M7.5 14.6 H14.8" stroke="#1890ff" stroke-width="1.3"/></svg>
<div class="t op" style="left:1763.5px;top:912.0px;line-height:30px;">修改</div>
<svg class="a" style="left:1812.5px;top:919.5px" width="15" height="16" viewBox="0 0 15 16"><path d="M0.5 3 H14.5 M4.8 3 V0.8 H10.2 V3 M2.2 3 V15 H12.8 V3 M5.8 6.5 V12 M9.2 6.5 V12" fill="none" stroke="#1890ff" stroke-width="1.3"/></svg>
<div class="t op" style="left:1829.5px;top:912.0px;line-height:30px;">删除</div>
<svg class="a" style="left:1768px;top:959.1px" width="15" height="14" viewBox="0 0 15 14"><path d="M0.7 12.8 V1 H5.5 L7 2.8 H13.5 V5 M0.7 12.8 L3 5.2 H14.3 L12 12.8 Z" fill="none" stroke="#1890ff" stroke-width="1.3" stroke-linejoin="round"/></svg>
<div class="t op" style="left:1786.0px;top:951.1px;line-height:30px;">附件管理</div>
<!-- pagination -->
<div class="t" style="left:1307.5px;top:1052px;font-size:18.27px;line-height:30px;color:#606266">共 5 条</div>
<div class="inp" style="left:1386px;top:1047.3px;width:140.7px;height:39.4px;border-radius:4.2px"></div>
<div class="t" style="left:1414px;top:1053px;font-size:18.27px;line-height:30px;color:#606266">10条/页</div>
<svg class="a" style="left:1503.5px;top:1064px" width="12" height="8" viewBox="0 0 12 8"><path d="M0.7 0.7 L6 6.8 L11.3 0.7" fill="none" stroke="#c0c4cc" stroke-width="1.3"/></svg>
<div class="a" style="left:1555px;top:1047.3px;width:41.7px;height:39.4px;border-radius:2.8px;background:#f4f4f5"></div>
<svg class="a" style="left:1571px;top:1061px" width="8" height="12" viewBox="0 0 8 12"><path d="M7 0.7 L1.2 6 L7 11.3" fill="none" stroke="#c0c4cc" stroke-width="1.4"/></svg>
<div class="a" style="left:1611px;top:1047.3px;width:41.7px;height:39.4px;border-radius:2.8px;background:#1890ff"></div>
<div class="t" style="left:1611px;width:41.7px;text-align:center;top:1052px;font-size:18.27px;line-height:30px;color:#fff;font-weight:bold">1</div>
<div class="a" style="left:1666.7px;top:1047.3px;width:42.3px;height:39.4px;border-radius:2.8px;background:#f4f4f5"></div>
<svg class="a" style="left:1684.5px;top:1061px" width="8" height="12" viewBox="0 0 8 12"><path d="M1 0.7 L6.8 6 L1 11.3" fill="none" stroke="#c0c4cc" stroke-width="1.4"/></svg>
<div class="t" style="left:1749.5px;top:1053px;font-size:18.27px;line-height:30px;color:#606266">前往</div>
<div class="inp" style="left:1792.3px;top:1047.3px;width:64.4px;height:39.4px;border-radius:4.2px"></div>
<div class="t" style="left:1792.3px;width:64.4px;text-align:center;top:1052px;font-size:18.27px;line-height:30px;color:#606266">1</div>
<div class="t" style="left:1862px;top:1053px;font-size:18.27px;line-height:30px;color:#606266">页</div>
<div class="wm" style="left:-21.3px;top:603px;transform:rotate(-30deg)"><span>w</span><span>w</span><span>w</span><span>.</span><span>c</span><span>o</span><span>d</span><span>e</span><span>3</span><span>8</span><span>6</span><span>.</span><span>c</span><span>o</span><span>m</span></div>
<div class="wm" style="left:842px;top:603px;transform:rotate(-30deg)"><span>w</span><span>w</span><span>w</span><span>.</span><span>c</span><span>o</span><span>d</span><span>e</span><span>3</span><span>8</span><span>6</span><span>.</span><span>c</span><span>o</span><span>m</span></div>
<div class="wm" style="left:1706.4px;top:603px;transform:rotate(-30deg)"><span>w</span><span>w</span><span>w</span><span>.</span><span>c</span><span>o</span><span>d</span><span>e</span><span>3</span><span>8</span><span>6</span><span>.</span><span>c</span><span>o</span><span>m</span></div>

</div>
</div></body></html>
